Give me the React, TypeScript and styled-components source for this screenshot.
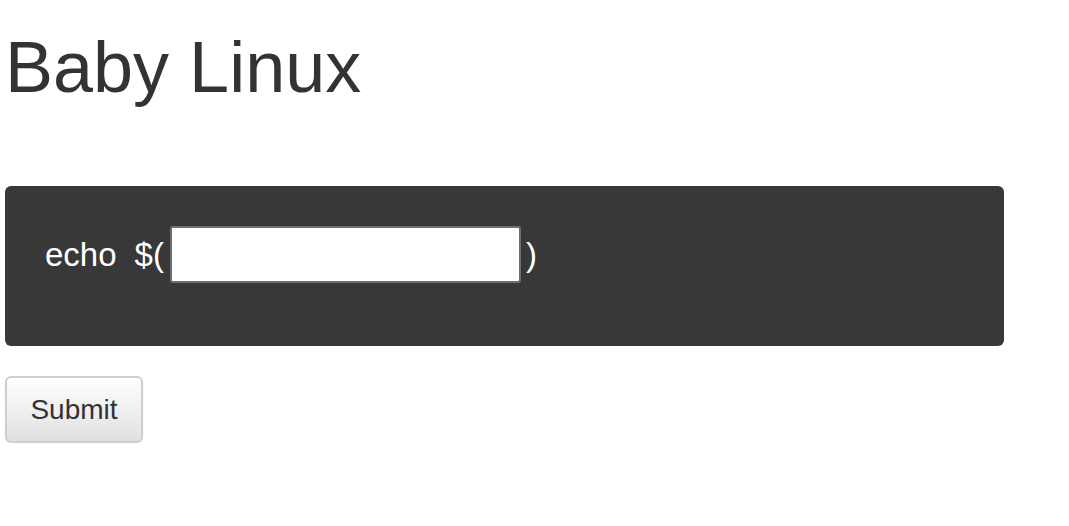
import React from 'react';
import styled, { createGlobalStyle } from 'styled-components';

const GlobalStyle = createGlobalStyle`
  html, body {
    margin: 0;
    padding: 0;
    background: #fff;
  }
  body {
    font-family: "Liberation Sans", Arial, sans-serif;
    color: #333;
  }
`;

const Page = styled.div`
  padding: 0 5px;
`;

const Title = styled.h1`
  margin: 28px 0 79px;
  font-size: 72px;
  font-weight: 400;
  line-height: 1.1;
  color: #333;
`;

const Terminal = styled.form`
  width: 999px;
  box-sizing: border-box;
  padding: 40px 40px 63px;
  background: #383838;
  border-radius: 6px;
  color: #fff;
  font-size: 33px;
`;

const Row = styled.div`
  display: flex;
  align-items: center;
`;

const Word = styled.span<{ $gap?: number }>`
  margin-right: ${({ $gap }) => $gap ?? 0}px;
  white-space: pre;
`;

const Field = styled.input`
  width: 351px;
  height: 57px;
  box-sizing: border-box;
  margin: 0 5px 0 0;
  padding: 0 10px;
  border: 2px solid #6f6f6f;
  border-radius: 3px;
  background: #fff;
  font-size: 24px;
  outline: none;
`;

const SubmitButton = styled.button`
  margin-top: 30px;
  width: 138px;
  height: 67px;
  border: 2px solid #cfcfcf;
  border-radius: 6px;
  background: linear-gradient(to bottom, #ffffff 0%, #e0e0e0 100%);
  box-shadow: 0 1px 2px rgba(0, 0, 0, 0.08);
  font-family: "Liberation Sans", Arial, sans-serif;
  font-size: 28px;
  color: #333;
  cursor: pointer;
`;

export default function App() {
  return (
    <Page>
      <GlobalStyle />
      <Title>Baby Linux</Title>
      <Terminal onSubmit={(e) => e.preventDefault()}>
        <Row>
          <Word $gap={18}>echo</Word>
          <Word $gap={6}>$(</Word>
          <Field type="text" name="cmd" />
          <Word>)</Word>
        </Row>
      </Terminal>
      <SubmitButton type="submit">Submit</SubmitButton>
    </Page>
  );
}
